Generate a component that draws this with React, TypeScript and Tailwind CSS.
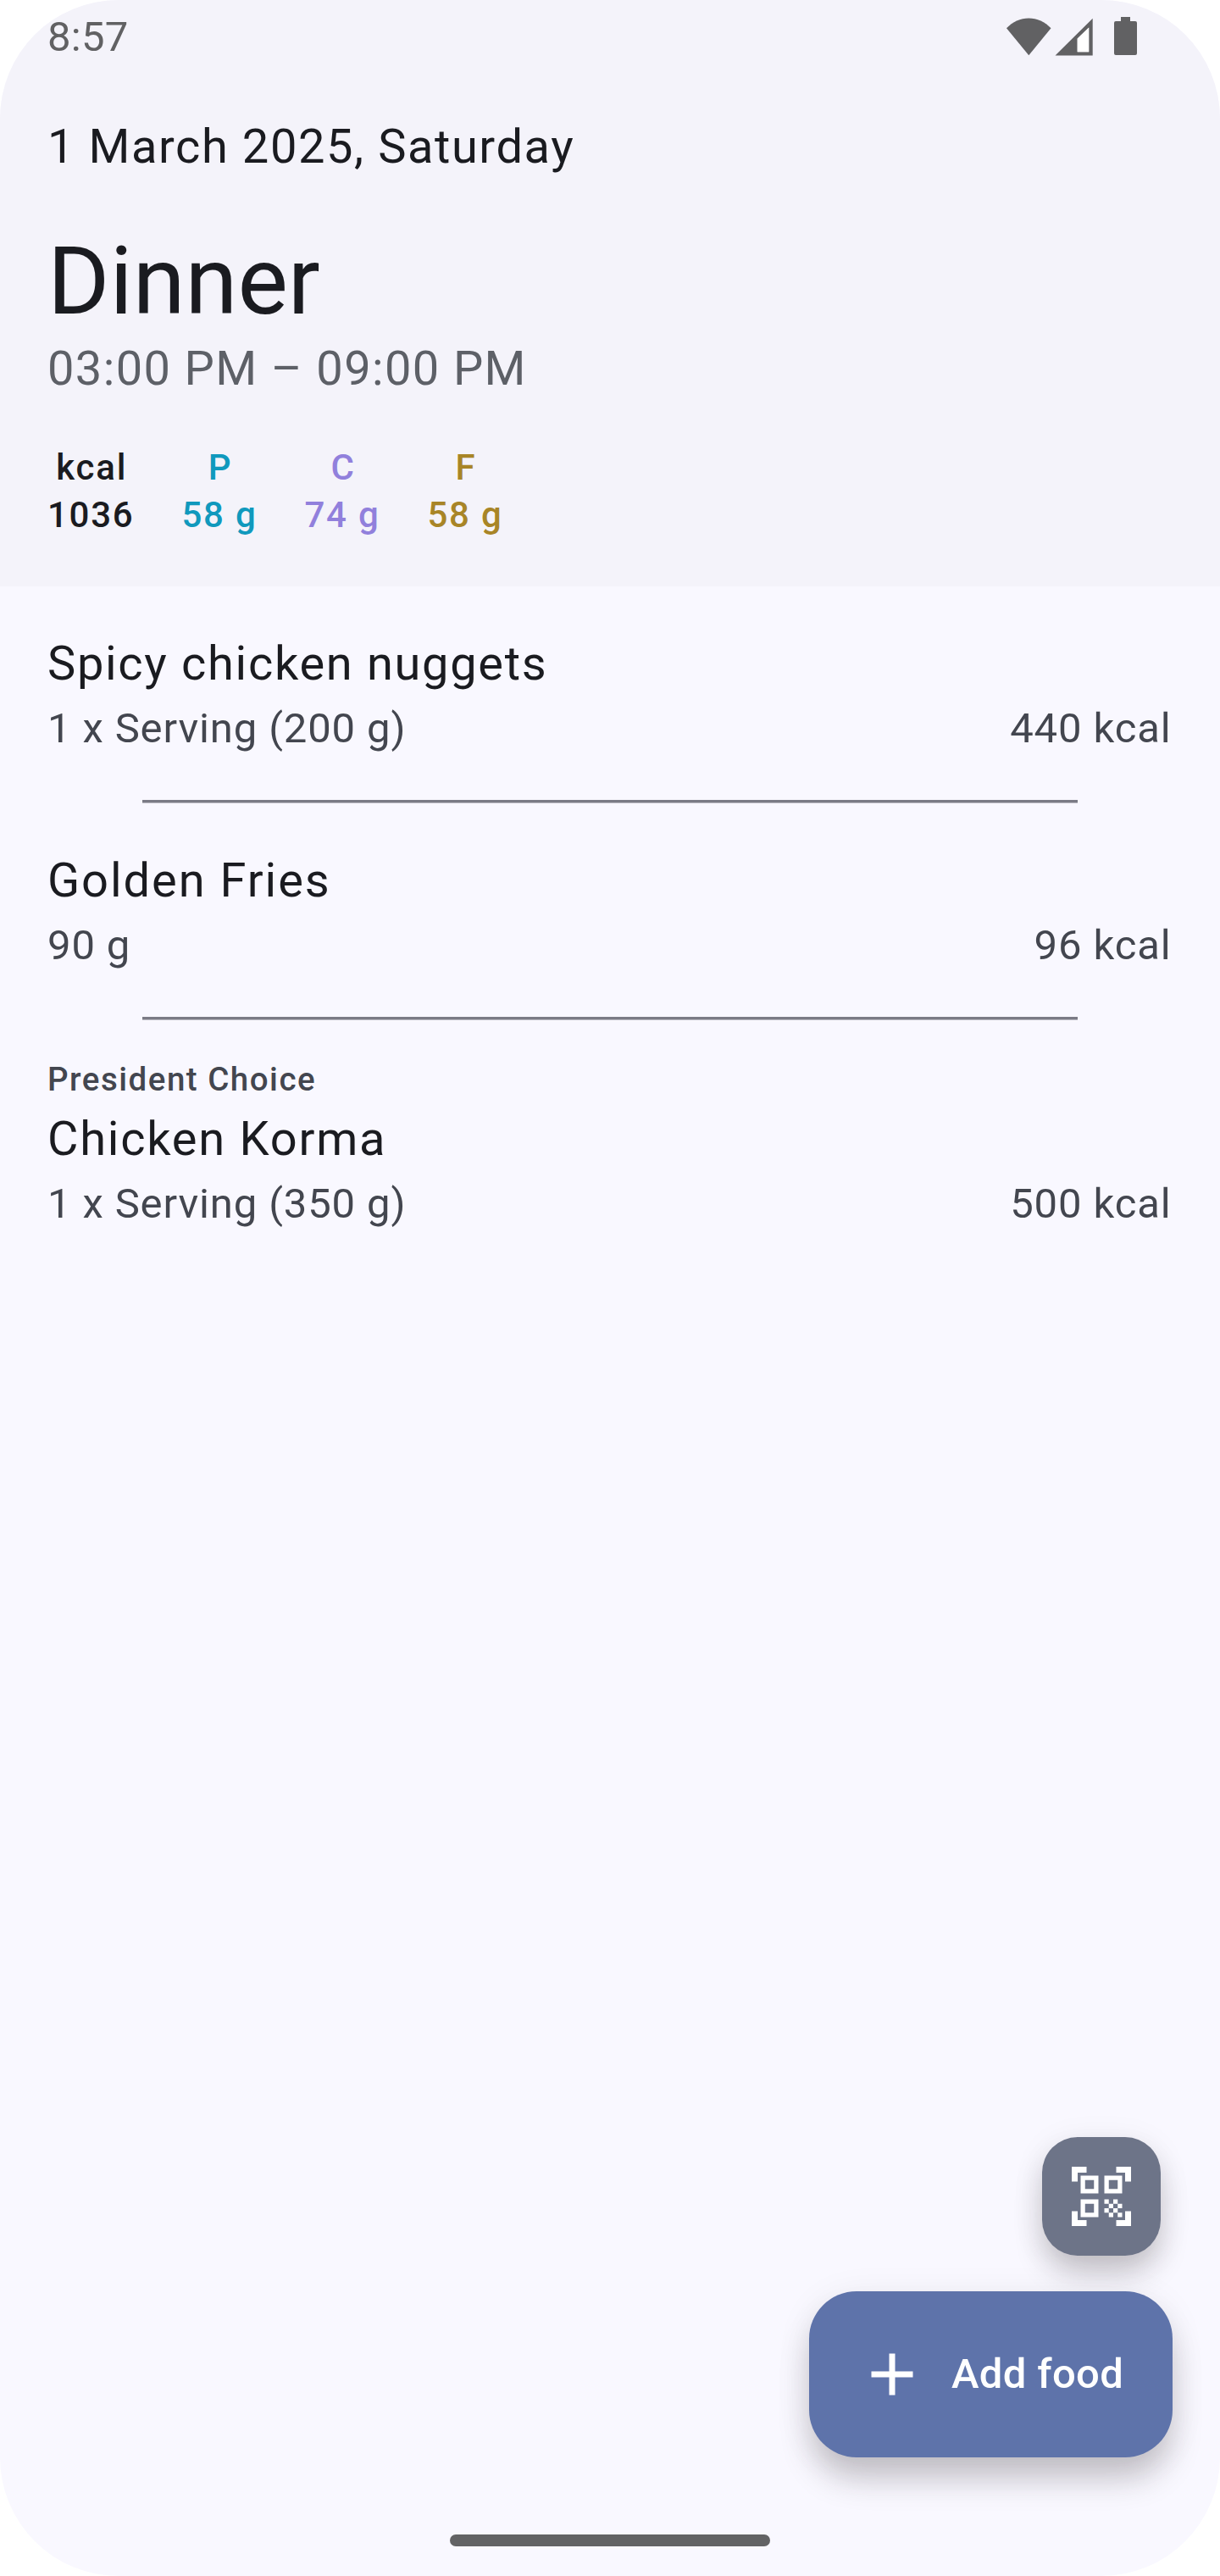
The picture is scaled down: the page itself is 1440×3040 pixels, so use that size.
import React from "react";

const macros = [
  { label: "kcal", value: "1036", color: "text-[#1a1b20]" },
  { label: "P", value: "58 g", color: "text-[#1099bd]" },
  { label: "C", value: "74 g", color: "text-[#9180dc]" },
  { label: "F", value: "58 g", color: "text-[#a88527]" },
];

type Food = { brand?: string; name: string; nameTracking: string; amount: string; kcal: string };

const foods: Food[] = [
  { name: "Spicy chicken nuggets", nameTracking: "tracking-[1.68px]", amount: "1 x Serving (200 g)", kcal: "440 kcal" },
  { name: "Golden Fries", nameTracking: "tracking-[1.95px]", amount: "90 g", kcal: "96 kcal" },
  {
    brand: "President Choice",
    name: "Chicken Korma",
    nameTracking: "tracking-[1.75px]",
    amount: "1 x Serving (350 g)",
    kcal: "500 kcal",
  },
];

function StatusBar() {
  return (
    <div className="flex h-[131px] items-start justify-between pl-[56px] pr-[98px] text-[#616163]">
      <span className="mt-[9px] text-[49px] leading-[70px] tracking-[0.3px]">8:57</span>
      <svg className="mt-[20px] h-[46px] w-[154px]" viewBox="0 0 154 46" fill="currentColor">
        <path d="M0 13.3 C14-2.600 38.500-2.600 52.500 13.300 L26.300 45.300Z" />
        <path fillRule="evenodd" d="M57.500 45.500 L101.700 1.700 V45.500Z M83.700 25.500 V41.200 H97.200 V12.500Z" />
        <path d="M83.700 25.500 V41.200 H97.200 V12.500Z" fill="#fff" />
        <path d="M135 0h11v5h6a2 2 0 0 1 2 2v36a2 2 0 0 1-2 2h-23a2 2 0 0 1-2-2V7a2 2 0 0 1 2-2h6Z" />
      </svg>
    </div>
  );
}

function FoodRow({ food }: { food: Food }) {
  return (
    <div className={food.brand ? "px-[56px] pt-[42px]" : "px-[56px] py-[49px]"}>
      {food.brand && (
        <div className="text-[38.5px] font-medium leading-[56px] tracking-[1.5px] text-[#43464f]">{food.brand}</div>
      )}
      <div className={food.nameTracking + " text-[56px] leading-[84px] text-[#1a1b20]"}>{food.name}</div>
      <div className="flex justify-between text-[49px] leading-[70px] tracking-[0.875px] text-[#43464f]">
        <span>{food.amount}</span>
        <span className="pr-[1.5px]">{food.kcal}</span>
      </div>
    </div>
  );
}

function QrScannerIcon() {
  return (
    <svg className="size-[84px]" viewBox="0 0 24 24" fill="currentColor">
      <path d="M9.500 6.500v3h-3v-3h3M11 5H5v6h6V5zm-1.500 9.500v3h-3v-3h3M11 13H5v6h6v-6zm6.500-6.500v3h-3v-3h3M19 5h-6v6h6V5zm-6 8h1.500v1.500H13V13zm1.500 1.500H16V16h-1.500v-1.500zM16 13h1.500v1.500H16V13zm-3 3h1.500v1.500H13V16zm1.500 1.500H16V19h-1.500v-1.500zM16 16h1.500v1.500H16V16zm1.500-1.500H19V16h-1.500v-1.500zm0 3H19V19h-1.500v-1.500zM22 7h-2V4h-3V2h5v5zm0 15v-5h-2v3h-3v2h5zM2 22h5v-2H4v-3H2v5zM2 2v5h2V4h3V2H2z" />
    </svg>
  );
}

export default function App() {
  return (
    <div className="h-[3040px] w-[1440px] bg-white font-['Roboto',sans-serif]">
      <div className="flex h-full flex-col overflow-hidden rounded-[140px] bg-[#f9f8ff]">
        <header className="h-[692px] shrink-0 bg-[#f4f3fa]">
          <StatusBar />
          <div className="px-[56px] text-[#1a1b20]">
            <div className="text-[56px] leading-[84px] tracking-[1.58px]">1 March 2025, Saturday</div>
            <h1 className="mt-[56px] text-[112px] leading-[122px]">Dinner</h1>
            <div className="text-[56px] leading-[84px] tracking-[1.38px] text-[#5d6067]">03:00 PM – 09:00 PM</div>
            <div className="mt-[47px] flex gap-[56px] text-[42px] font-medium leading-[56px] tracking-[1.75px]">
              {macros.map((m) => (
                <div key={m.label} className={m.color + " flex flex-col items-center"}>
                  <span className="pl-[2px]">{m.label}</span>
                  <span>{m.value}</span>
                </div>
              ))}
            </div>
          </div>
        </header>

        <main className="flex-1">
          {foods.map((food, i) => (
            <React.Fragment key={food.name}>
              {i > 0 && <div className="mx-[168px] h-[4px] border-b border-[#b9b8c0] bg-[#7b7b86]" />}
              <FoodRow food={food} />
            </React.Fragment>
          ))}
        </main>

        <div className="flex flex-col items-end gap-[42px] pr-[56px]">
          <button className="mr-[14px] flex size-[140px] items-center justify-center rounded-[42px] bg-[#6d7488] text-white shadow-[0_22px_36px_-4px_rgba(30,22,26,0.24),0_6px_40px_rgba(30,22,26,0.07)]">
            <QrScannerIcon />
          </button>
          <button className="flex h-[196px] w-[429px] items-center gap-[28px] rounded-[56px] bg-[#5e73aa] pl-[56px] text-white shadow-[0_28px_38px_-4px_rgba(30,22,26,0.23),0_6px_44px_rgba(30,22,26,0.07)]">
            <svg className="size-[84px]" viewBox="0 0 24 24" fill="currentColor">
              <path d="M19 13h-6v6h-2v-6H5v-2h6V5h2v6h6v2z" />
            </svg>
            <span className="whitespace-nowrap text-[49px] font-medium leading-[70px] tracking-[0.35px]">Add food</span>
          </button>
        </div>

        <div className="flex h-[140px] items-end justify-center pb-[35px]">
          <div className="h-[14px] w-[378px] rounded-[7px] bg-[#636365]" />
        </div>
      </div>
    </div>
  );
}
